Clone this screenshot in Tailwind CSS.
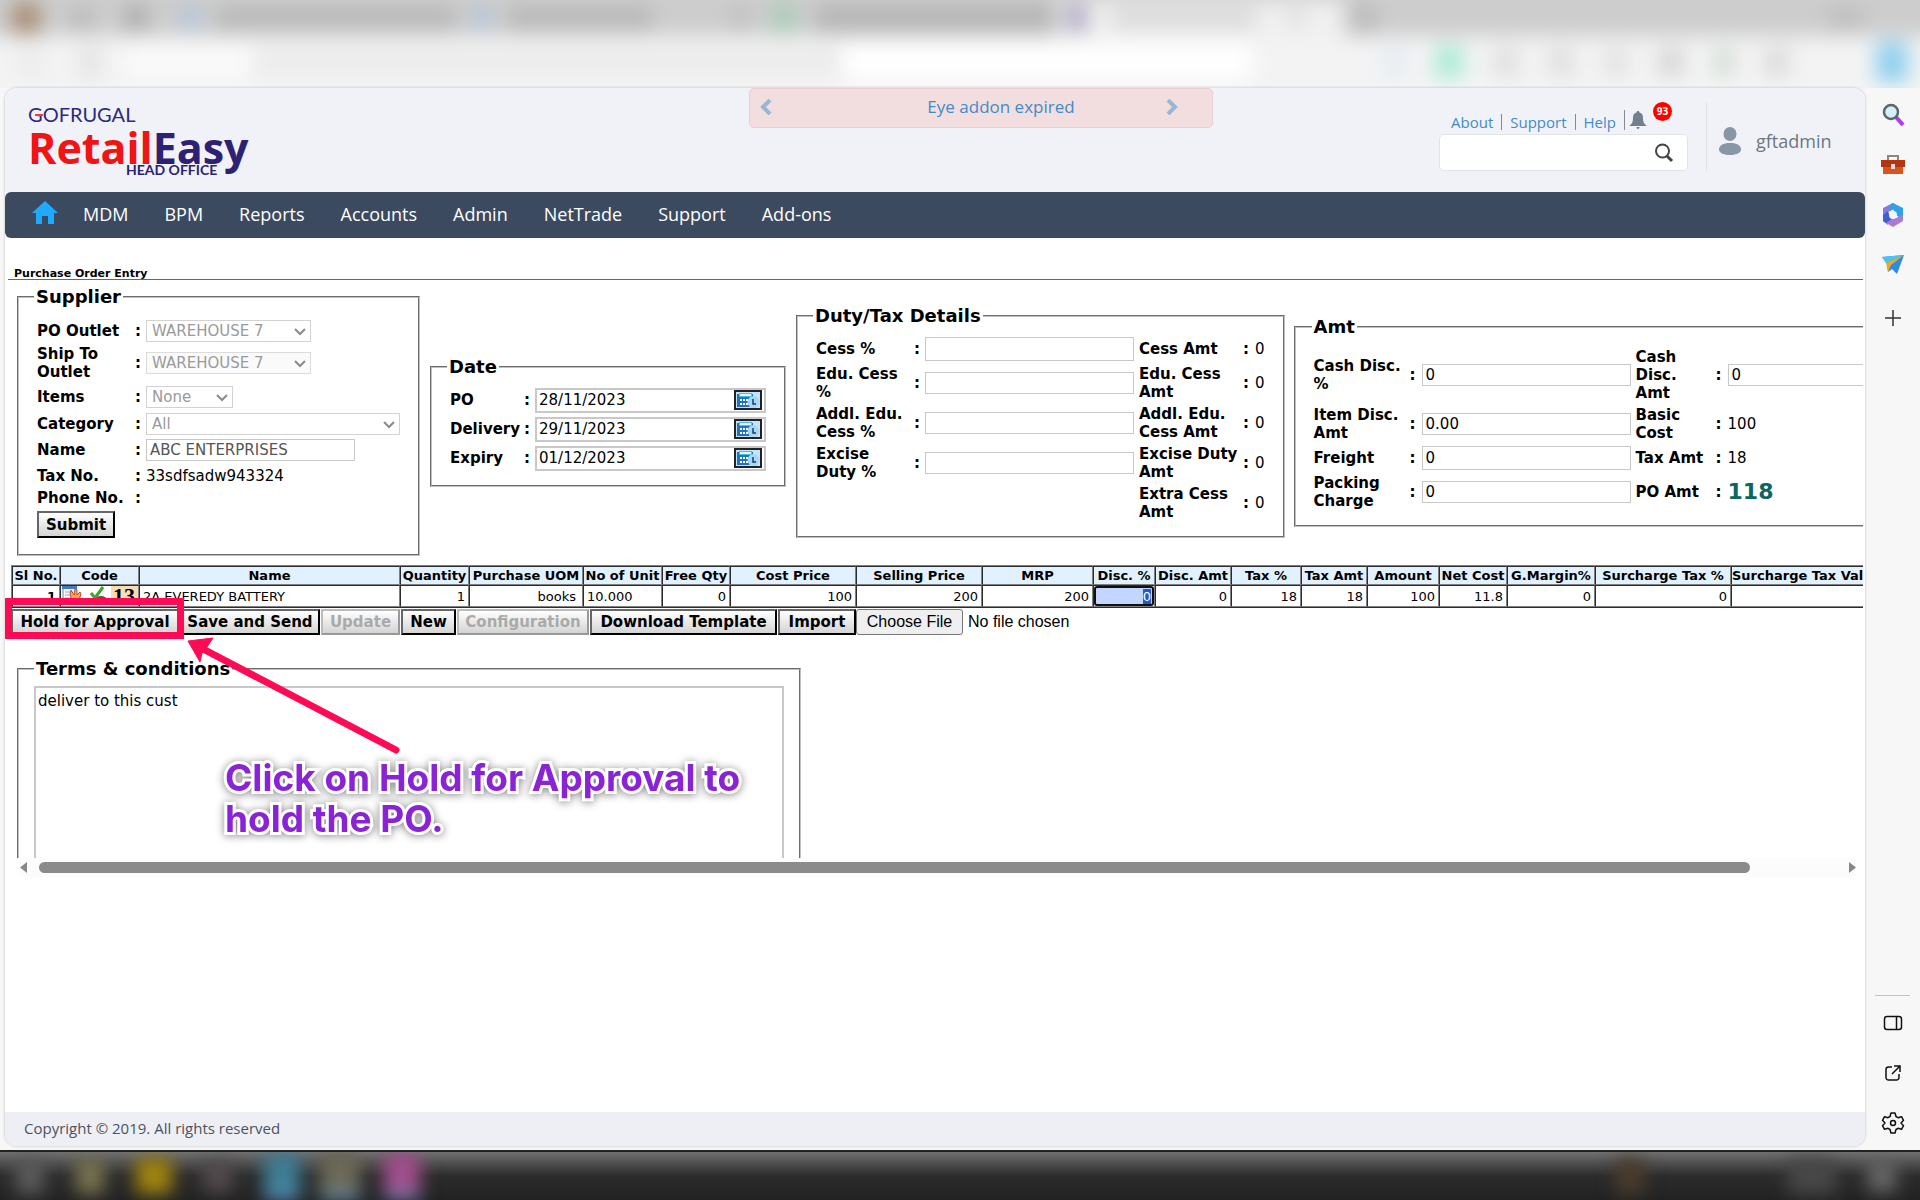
<!DOCTYPE html>
<html lang="en">
<head>
    <meta charset="UTF-8">
    <meta name="viewport" content="width=device-width, initial-scale=1.0">
    <title>Purchase Order Entry</title>
    <script src="https://cdn.jsdelivr.net/npm/@tailwindcss/browser@4"></script>
</head>
<body class="min-h-screen flex flex-col bg-[#f7f7f7] text-black font-['DejaVu_Sans',Verdana,sans-serif]">

    <!-- Browser tabs and toolbar, out of focus -->
    <div class="h-[88px] overflow-hidden bg-[#f3f3f5]" aria-hidden="true">
        <div class="-mx-5 -mt-5 px-5 pt-5 blur-[10px] bg-[#cdcdcd]">
            <div class="h-9 flex items-center">
                <div class="ml-3 w-7 h-8 bg-[#a98f78]"></div>
                <div class="ml-8 w-5 h-5 bg-[#b5b5b5]"></div>
                <div class="ml-8 w-6 h-6 bg-[#adadad]"></div>
                <div class="ml-8 w-5 h-6 bg-[#b4c6da]"></div>
                <div class="ml-4 w-60 h-6 bg-[#b9b9b9]"></div>
                <div class="ml-4 w-5 h-6 bg-[#b4c6da]"></div>
                <div class="ml-4 w-36 h-6 bg-[#b9b9b9]"></div>
                <div class="ml-20 w-4 h-5 bg-[#bcbcbc]"></div>
                <div class="ml-6 w-6 h-7 bg-[#a9cdb6]"></div>
                <div class="ml-5 w-60 h-7 bg-[#b6b6b6]"></div>
                <div class="w-72 h-full bg-[#f0f0f0] flex items-center">
                    <div class="ml-2 w-6 h-7 bg-[#b5afc6]"></div>
                    <div class="ml-6 w-36 h-5 bg-[#d9d9d9]"></div>
                    <div class="ml-8 w-4 h-4 bg-[#d9d9d9]"></div>
                </div>
                <div class="ml-2 w-6 h-7 bg-[#bababa]"></div>
                <div class="ml-auto mr-14 w-9 h-5 bg-[#bdbdbd]"></div>
            </div>
            <div class="h-16 -mx-5 px-5 pb-3 bg-[#f3f3f4] flex items-center">
                <div class="ml-5 w-5 h-8 bg-[#ebebeb]"></div>
                <div class="ml-10 w-5 h-8 bg-[#e3e3e3]"></div>
                <div class="ml-6 w-32 h-8 bg-[#fafafa]"></div>
                <div class="w-[590px] h-6 bg-[#ebebeb]"></div>
                <div class="w-[410px] h-9 bg-white"></div>
                <div class="ml-auto flex items-center gap-[31px]">
                    <div class="w-5 h-7 bg-[#e3ebf3]"></div>
                    <div class="w-7 h-8 bg-[#a9ecd5]"></div>
                    <div class="w-6 h-7 bg-[#dfdfdf]"></div>
                    <div class="w-6 h-7 bg-[#dedede]"></div>
                    <div class="w-6 h-7 bg-[#e2e2e2]"></div>
                    <div class="w-6 h-7 bg-[#d5d5d5]"></div>
                    <div class="w-5 h-7 bg-[#d2ddd2]"></div>
                    <div class="w-6 h-7 bg-[#dadada]"></div>
                    <div class="ml-14 mr-3 w-8 h-10 bg-[#8fd0ee]"></div>
                </div>
            </div>
        </div>
    </div>

    <div class="flex-1 flex">
        <!-- Application page -->
        <div class="relative flex-1 min-w-0 flex flex-col ml-[5px] mb-1 bg-white rounded-xl overflow-hidden shadow-[0_0_3px_#bbb]">

            <header class="flex h-[104px] bg-[#f1f2f8] font-['Open_Sans',sans-serif]">
                <!-- Logo -->
                <div class="w-[744px] pl-[23px] pt-[13px]">
                    <div class="relative w-[222px]">
                        <div class="font-['Lato',sans-serif] text-[20px] leading-[26px] text-[#2c2a80]">
                            <span class="relative">G<i class="absolute right-0 top-[12px] w-2 h-[2px] bg-[#f0402c]"></i></span>OFRUGAL
                        </div>
                        <div class="text-[43px] leading-[42px] font-bold text-[#f01414]">Retail<span class="text-[#2d2173]">Easy</span></div>
                        <div class="absolute left-[98px] top-[60px] font-['Lato',sans-serif] text-[14px] leading-[18px] font-bold text-[#2d2173] whitespace-nowrap">HEAD OFFICE</div>
                    </div>
                </div>

                <!-- Licence alert -->
                <div class="w-[464px] h-10 px-2 pb-[3px] flex items-center bg-[#f2dede] border border-[#ebccd1] rounded-[5px] text-[17px] text-[#428bca]">
                    <button type="button" aria-label="Previous">
                        <svg class="w-4 h-4" viewBox="0 0 16 16" fill="none" stroke="#9ab6d6" stroke-width="4"><path d="M12 1 5 8l7 7"/></svg>
                    </button>
                    <a href="#" class="flex-1 pl-24 text-center">Eye addon expired</a>
                    <button type="button" aria-label="Next" class="ml-8 mr-6">
                        <svg class="w-4 h-4" viewBox="0 0 16 16" fill="none" stroke="#9ab6d6" stroke-width="4"><path d="m4 1 7 7-7 7"/></svg>
                    </button>
                </div>

                <div class="ml-auto pt-[14px] mr-[18px]">
                    <div class="flex items-center h-8 pt-2 pl-3 text-[15px] text-[#428bca]">
                        <a href="#" class="pr-2">About</a>
                        <a href="#" class="px-2 border-l border-[#888] leading-4">Support</a>
                        <a href="#" class="px-2 border-l border-[#888] leading-4">Help</a>
                        <button type="button" aria-label="Notifications" class="relative -mt-1 pl-1 border-l border-[#888]">
                            <svg class="w-[18px] h-5" viewBox="0 0 18 20" fill="#708090"><path d="M9 1c1 0 1.500.600 1.500 1.500C13 3 14 5 14 8c0 4 1 6 3.500 7.500V16H.500v-.500C3 14 4 12 4 8c0-3 1-5 3.500-5.500C7.500 1.600 8 1 9 1ZM7.500 17h3c0 1-.600 2-1.500 2s-1.500-1-1.500-2Z"/></svg>
                            <span class="absolute left-[28px] -top-[8px] w-[19px] h-[19px] rounded-full bg-[#ff0000] text-white text-[10px] leading-[19px] font-bold">93</span>
                        </button>
                    </div>
                    <div class="relative">
                        <input type="text" aria-label="Search" class="w-[249px] h-[37px] px-2 bg-white border border-[#e1e3ea] rounded-[5px]">
                        <svg class="absolute right-[14px] top-[9px] w-5 h-5" viewBox="0 0 20 20" fill="none" stroke="#444" stroke-width="2"><circle cx="8.500" cy="8" r="6.500"/><path d="m13 13 5 5" stroke-width="3"/></svg>
                    </div>
                </div>
                <div class="w-[159px] h-[70px] mt-[14px] pt-2 pl-[11px] flex items-center gap-[14px] border-l border-[#e0e2ea]">
                    <svg class="w-6 h-7" viewBox="0 0 24 28" fill="#8996a5"><ellipse cx="12" cy="7" rx="6.500" ry="7"/><path d="M12 16c7 0 11 2.500 11 6.500 0 3-4 5.500-11 5.500S1 25.500 1 22.500C1 18.500 5 16 12 16Z"/></svg>
                    <span class="text-[18px] font-medium text-[#6b7785]">gftadmin</span>
                </div>
            </header>

            <nav class="h-[46px] pl-[27px] pb-px flex items-center gap-9 rounded-md bg-[#3c4a5f] text-white text-[18px] font-['Open_Sans',sans-serif]">
                <a href="#" aria-label="Home" class="-mr-[11px]">
                    <svg class="w-[26px] h-[23px] mb-1" viewBox="0 0 26 23" fill="#1fa9ff"><path d="M13 0 0 12h4v11h6v-8h6v8h6V12h4Z"/></svg>
                </a>
                <a href="#">MDM</a>
                <a href="#">BPM</a>
                <a href="#">Reports</a>
                <a href="#">Accounts</a>
                <a href="#">Admin</a>
                <a href="#">NetTrade</a>
                <a href="#">Support</a>
                <a href="#">Add-ons</a>
            </nav>

            <main class="ml-[3px] mr-[2px] pt-[30px] overflow-hidden">
                <h1 class="pl-[6px] text-[11px] leading-[11px] font-bold border-b border-[#3d7299]">Purchase Order Entry</h1>

                <form>
                    <div class="mt-[7px] ml-[9px] flex items-center gap-[10px] text-[15px] leading-[18px]">

                        <!-- Supplier -->
                        <fieldset class="shrink-0 w-[403px] px-[18px] pb-4 border-2 [border-style:groove] border-[#c0c0c0]">
                            <legend class="-ml-[3px] px-[2px] text-[18px] leading-5 font-bold">Supplier</legend>
                            <div class="pt-[11px] grid grid-cols-[98px_11px_auto] grid-rows-[26px_38px_30px_24px_28px_24px_20px] items-center justify-items-start">
                                <label for="poOutlet" class="font-bold">PO Outlet</label><b>:</b>
                                <div class="relative">
                                    <select id="poOutlet" disabled class="appearance-none w-[165px] h-[22px] pl-[5px] border border-[#d2d2d2] bg-white text-[#9a9a9a]"><option>WAREHOUSE 7</option></select>
                                    <svg class="absolute right-[5px] top-2 w-3 h-2" viewBox="0 0 12 8" fill="none" stroke="#8a8a8a" stroke-width="2"><path d="m1 1 5 5 5-5"/></svg>
                                </div>
                                <label for="shipOutlet" class="font-bold">Ship To Outlet</label><b>:</b>
                                <div class="relative">
                                    <select id="shipOutlet" disabled class="appearance-none w-[165px] h-[22px] pl-[5px] border border-[#dcdcdc] bg-[#fafafa] text-[#9a9a9a]"><option>WAREHOUSE 7</option></select>
                                    <svg class="absolute right-[5px] top-2 w-3 h-2" viewBox="0 0 12 8" fill="none" stroke="#8a8a8a" stroke-width="2"><path d="m1 1 5 5 5-5"/></svg>
                                </div>
                                <label for="items" class="font-bold">Items</label><b>:</b>
                                <div class="relative">
                                    <select id="items" disabled class="appearance-none w-[87px] h-[22px] pl-[5px] border border-[#d2d2d2] bg-white text-[#9a9a9a]"><option>None</option></select>
                                    <svg class="absolute right-[5px] top-2 w-3 h-2" viewBox="0 0 12 8" fill="none" stroke="#8a8a8a" stroke-width="2"><path d="m1 1 5 5 5-5"/></svg>
                                </div>
                                <label for="category" class="font-bold">Category</label><b>:</b>
                                <div class="relative">
                                    <select id="category" disabled class="appearance-none w-[254px] h-[22px] pl-[5px] border border-[#d2d2d2] bg-white text-[#9a9a9a]"><option>All</option></select>
                                    <svg class="absolute right-[5px] top-2 w-3 h-2" viewBox="0 0 12 8" fill="none" stroke="#8a8a8a" stroke-width="2"><path d="m1 1 5 5 5-5"/></svg>
                                </div>
                                <label for="name" class="font-bold">Name</label><b>:</b>
                                <input type="text" id="name" value="ABC ENTERPRISES" disabled class="w-[209px] h-[22px] px-[3px] border border-[#c8c8c8] text-[#555]">
                                <b>Tax No.</b><b>:</b><span>33sdfsadw943324</span>
                                <b>Phone No.</b><b>:</b><span></span>
                            </div>
                            <button type="submit" class="mt-[3px] h-[27px] px-[7px] border-2 border-t-[#666] border-l-[#666] border-r-black border-b-black bg-linear-to-b from-white to-[#d4d4d4] font-bold">Submit</button>
                        </fieldset>

                        <!-- Dates -->
                        <fieldset class="shrink-0 w-[356px] px-[18px] pb-[14px] border-2 [border-style:groove] border-[#c0c0c0]">
                            <legend class="-ml-[3px] px-[2px] text-[18px] leading-5 font-bold">Date</legend>
                            <div class="pt-[11px] grid grid-cols-[74px_11px_231px] gap-y-1 items-center">
                                <label for="poDate" class="font-bold">PO</label><b>:</b>
                                <div class="flex items-center h-[25px] pr-[2px] border-2 border-[#c8c8c8]">
                                    <input type="text" id="poDate" value="28/11/2023" class="flex-1 min-w-0 pl-[2px]">
                                    <button type="button" aria-label="Pick PO date"><svg class="w-7 h-5" viewBox="0 0 28 20"><path d="M0 0h28v20H0Z" fill="#222"/><path d="M2 2h24v16H2Z" fill="#c4e4f8"/><path d="M3 4h16v13H3Z" fill="#1f73bd"/><path d="M5 3h13v4H5Z" fill="#3fc4e6"/><path d="M6 4h11v2H6Z" fill="#e9f6ff"/><path d="M6 9h2v2H6Zm3 0h2v2H9Zm3 0h2v2h-2Zm-6 4h2v2H6Zm3 0h2v2H9Zm3 0h2v2h-2Z" fill="#fff"/><circle cx="19.500" cy="12" r="6" fill="#a8d6f5"/><path d="M19 9v5h3" fill="none" stroke="#173f66" stroke-width="1.500"/></svg></button>
                                </div>
                                <label for="deliveryDate" class="font-bold">Delivery</label><b>:</b>
                                <div class="flex items-center h-[25px] pr-[2px] border-2 border-[#c8c8c8]">
                                    <input type="text" id="deliveryDate" value="29/11/2023" class="flex-1 min-w-0 pl-[2px]">
                                    <button type="button" aria-label="Pick delivery date"><svg class="w-7 h-5" viewBox="0 0 28 20"><path d="M0 0h28v20H0Z" fill="#222"/><path d="M2 2h24v16H2Z" fill="#c4e4f8"/><path d="M3 4h16v13H3Z" fill="#1f73bd"/><path d="M5 3h13v4H5Z" fill="#3fc4e6"/><path d="M6 4h11v2H6Z" fill="#e9f6ff"/><path d="M6 9h2v2H6Zm3 0h2v2H9Zm3 0h2v2h-2Zm-6 4h2v2H6Zm3 0h2v2H9Zm3 0h2v2h-2Z" fill="#fff"/><circle cx="19.500" cy="12" r="6" fill="#a8d6f5"/><path d="M19 9v5h3" fill="none" stroke="#173f66" stroke-width="1.500"/></svg></button>
                                </div>
                                <label for="expiryDate" class="font-bold">Expiry</label><b>:</b>
                                <div class="flex items-center h-[25px] pr-[2px] border-2 border-[#c8c8c8]">
                                    <input type="text" id="expiryDate" value="01/12/2023" class="flex-1 min-w-0 pl-[2px]">
                                    <button type="button" aria-label="Pick expiry date"><svg class="w-7 h-5" viewBox="0 0 28 20"><path d="M0 0h28v20H0Z" fill="#222"/><path d="M2 2h24v16H2Z" fill="#c4e4f8"/><path d="M3 4h16v13H3Z" fill="#1f73bd"/><path d="M5 3h13v4H5Z" fill="#3fc4e6"/><path d="M6 4h11v2H6Z" fill="#e9f6ff"/><path d="M6 9h2v2H6Zm3 0h2v2H9Zm3 0h2v2h-2Zm-6 4h2v2H6Zm3 0h2v2H9Zm3 0h2v2h-2Z" fill="#fff"/><circle cx="19.500" cy="12" r="6" fill="#a8d6f5"/><path d="M19 9v5h3" fill="none" stroke="#173f66" stroke-width="1.500"/></svg></button>
                                </div>
                            </div>
                        </fieldset>

                        <!-- Duty and tax -->
                        <fieldset class="shrink-0 w-[487px] px-[18px] pb-[15px] border-2 [border-style:groove] border-[#c0c0c0]">
                            <legend class="-ml-[3px] px-[2px] text-[18px] leading-5 font-bold">Duty/Tax Details</legend>
                            <div class="pt-[11px] grid grid-cols-[98px_11px_209px_109px_12px_auto] gap-y-1 items-center">
                                <label for="cess" class="font-bold">Cess %</label><b>:</b>
                                <input type="text" id="cess" class="h-6 px-[3px] border border-[#c8c8c8]">
                                <b class="pl-[5px]">Cess Amt</b><b>:</b><span>0</span>
                                <label for="eduCess" class="font-bold">Edu. Cess %</label><b>:</b>
                                <input type="text" id="eduCess" class="h-[22px] px-[3px] border border-[#c8c8c8]">
                                <b class="pl-[5px]">Edu. Cess Amt</b><b>:</b><span>0</span>
                                <label for="addlCess" class="font-bold">Addl. Edu. Cess %</label><b>:</b>
                                <input type="text" id="addlCess" class="h-[22px] px-[3px] border border-[#c8c8c8]">
                                <b class="pl-[5px]">Addl. Edu. Cess Amt</b><b>:</b><span>0</span>
                                <label for="excise" class="font-bold">Excise Duty %</label><b>:</b>
                                <input type="text" id="excise" class="h-[22px] px-[3px] border border-[#c8c8c8]">
                                <b class="pl-[5px]">Excise Duty Amt</b><b>:</b><span>0</span>
                                <b class="col-start-4 pl-[5px]">Extra Cess Amt</b><b>:</b><span>0</span>
                            </div>
                        </fieldset>

                        <!-- Amounts -->
                        <fieldset class="shrink-0 w-[664px] -ml-px pl-[18px] pb-[15px] border-2 [border-style:groove] border-[#c0c0c0]">
                            <legend class="-ml-[2px] px-[2px] text-[18px] leading-5 font-bold">Amt</legend>
                            <div class="pt-[11px] grid grid-cols-[96px_12px_209px_85px_12px_209px] gap-y-1 items-center">
                                <label for="cashDisc" class="font-bold">Cash Disc. %</label><b>:</b>
                                <input type="text" id="cashDisc" value="0" class="h-[22px] px-[3px] border border-[#c8c8c8]">
                                <label for="cashDiscAmt" class="pl-[5px] font-bold">Cash Disc. Amt</label><b>:</b>
                                <input type="text" id="cashDiscAmt" value="0" class="h-[22px] px-[3px] border border-[#c8c8c8]">
                                <label for="itemDisc" class="font-bold">Item Disc. Amt</label><b>:</b>
                                <input type="text" id="itemDisc" value="0.00" class="h-[22px] px-[3px] border border-[#c8c8c8]">
                                <b class="pl-[5px]">Basic Cost</b><b>:</b><span>100</span>
                                <label for="freight" class="font-bold">Freight</label><b>:</b>
                                <input type="text" id="freight" value="0" class="h-6 px-[3px] border border-[#c8c8c8]">
                                <b class="pl-[5px]">Tax Amt</b><b>:</b><span>18</span>
                                <label for="packing" class="font-bold">Packing Charge</label><b>:</b>
                                <input type="text" id="packing" value="0" class="h-[22px] px-[3px] border border-[#c8c8c8]">
                                <b class="pl-[5px]">PO Amt</b><b>:</b><b class="text-[22px] text-[#0a6664]">118</b>
                            </div>
                        </fieldset>
                    </div>

                    <!-- Item lines -->
                    <table class="mt-[9px] ml-[3px] w-[1870px] table-fixed border-separate border-spacing-0 border border-t-[#808080] border-l-[#808080] border-r-[#2c2c2c] border-b-[#2c2c2c] text-[13px] leading-[17px] whitespace-nowrap">
                        <colgroup>
                            <col class="w-[48px]"><col class="w-[79px]"><col class="w-[261px]"><col class="w-[69px]"><col class="w-[114px]"><col class="w-[79px]"><col class="w-[68px]"><col class="w-[126px]"><col class="w-[126px]"><col class="w-[111px]"><col class="w-[62px]"><col class="w-[76px]"><col class="w-[70px]"><col class="w-[66px]"><col class="w-[72px]"><col class="w-[68px]"><col class="w-[88px]"><col class="w-[136px]"><col class="w-[149px]">
                        </colgroup>
                        <thead>
                            <tr class="bg-[#e1f1ff] [&>th]:border [&>th]:border-t-[#2c2c2c] [&>th]:border-l-[#2c2c2c] [&>th]:border-r-[#808080] [&>th]:border-b-[#808080]">
                                <th>Sl No.</th><th>Code</th><th>Name</th><th>Quantity</th><th>Purchase UOM</th><th>No of Unit</th><th>Free Qty</th><th>Cost Price</th><th>Selling Price</th><th>MRP</th><th>Disc. %</th><th>Disc. Amt</th><th>Tax %</th><th>Tax Amt</th><th>Amount</th><th>Net Cost</th><th>G.Margin%</th><th>Surcharge Tax %</th><th>Surcharge Tax Value</th>
                            </tr>
                        </thead>
                        <tbody>
                            <tr class="h-[22px] text-right [&>td]:px-[3px] [&>td]:border [&>td]:border-t-[#2c2c2c] [&>td]:border-l-[#2c2c2c] [&>td]:border-r-[#808080] [&>td]:border-b-[#808080]">
                                <td class="font-bold">1</td>
                                <td class="bg-linear-to-r from-white from-65% to-[#f8dcb4] to-65%">
                                    <div class="-ml-[2px] h-5 flex items-start justify-between">
                                        <svg class="w-5 h-5" viewBox="0 0 20 20"><path d="M1 1h13v16H1Z" fill="#f4f8ff" stroke="#5c84c4"/><path d="M0 0h15v3H0Z" fill="#3f78d0"/><path d="M3 6h7M3 9h5M3 12h6" stroke="#9ab" /><path d="m9 4 3 5 1-6 2 1v5l3-3 1 2-2 6-2 5-5-4-2-7Z" fill="#f4a66a" stroke="#b4532a"/></svg>
                                        <svg class="w-5 h-5" viewBox="0 0 20 20"><ellipse cx="13" cy="14" rx="6" ry="4" fill="#555"/><path d="m3 7 4 5L15 1" fill="none" stroke="#3ea52c" stroke-width="3"/></svg>
                                        <span class="font-['Liberation_Serif',serif] text-[22px] leading-5 font-bold">13</span>
                                    </div>
                                </td>
                                <td class="text-left">2A EVEREDY BATTERY</td>
                                <td>1</td>
                                <td><span class="pr-[3px]">books</span></td>
                                <td class="text-left">10.000</td>
                                <td>0</td><td>100</td><td>200</td><td>200</td>
                                <td class="relative"><input type="text" id="discPercent" aria-label="Disc. %" value="0" class="absolute inset-0 h-[20px] w-full pr-px text-right border-2 border-[#101010] rounded-[3px] bg-[#c2d6ff] outline-none selection:bg-[#1f5bd0] selection:text-white"></td>
                                <td>0</td><td>18</td><td>18</td><td>100</td><td>11.8</td><td>0</td><td>0</td><td>0</td>
                            </tr>
                        </tbody>
                    </table>

                    <!-- Actions -->
                    <div class="mt-px ml-[3px] flex items-start gap-px text-[15px] font-bold whitespace-nowrap">
                        <button type="button" class="h-[26px] w-[168px] border-2 border-t-[#666] border-l-[#666] border-r-black border-b-black bg-linear-to-b from-white to-[#d4d4d4]">Hold for Approval</button>
                        <button type="button" class="h-[26px] w-[140px] border-2 border-t-[#666] border-l-[#666] border-r-black border-b-black bg-linear-to-b from-white to-[#d4d4d4]">Save and Send</button>
                        <button type="button" disabled class="h-[26px] w-[79px] border-2 border-t-[#bbb] border-l-[#bbb] border-r-[#999] border-b-[#999] bg-linear-to-b from-white to-[#d4d4d4] text-[#aaa]">Update</button>
                        <button type="button" class="h-[26px] w-[55px] border-2 border-t-[#666] border-l-[#666] border-r-black border-b-black bg-linear-to-b from-white to-[#d4d4d4]">New</button>
                        <button type="button" disabled class="h-[26px] w-[132px] border-2 border-t-[#bbb] border-l-[#bbb] border-r-[#999] border-b-[#999] bg-linear-to-b from-white to-[#d4d4d4] text-[#aaa]">Configuration</button>
                        <button type="button" class="h-[26px] w-[187px] border-2 border-t-[#666] border-l-[#666] border-r-black border-b-black bg-linear-to-b from-white to-[#d4d4d4]">Download Template</button>
                        <button type="button" class="h-[26px] w-[78px] border-2 border-t-[#666] border-l-[#666] border-r-black border-b-black bg-linear-to-b from-white to-[#d4d4d4]">Import</button>
                        <input type="file" aria-label="Import file" class="-ml-px h-[26px] w-[320px] font-normal text-[16px] leading-[22px] font-['Liberation_Sans',Arial,sans-serif] file:h-[26px] file:w-[107px] file:mr-[5px] file:p-0 file:border file:border-solid file:border-[#767676] file:rounded-[3px] file:bg-[#efefef]">
                    </div>

                    <!-- Terms, running on below the fold of the scroll area -->
                    <fieldset class="mt-[24px] ml-[9px] w-[784px] px-[15px] border-2 border-b-0 [border-style:groove] border-[#c0c0c0]">
                        <legend class="px-[2px] text-[18px] leading-5 font-bold">Terms &amp; conditions</legend>
                        <textarea aria-label="Terms and conditions" class="block mt-[7px] w-full h-[172px] px-[2px] py-[4px] resize-none border-2 border-b-0 border-[#c8c8c8] text-[15px] leading-[18px]">deliver to this cust</textarea>
                    </fieldset>
                </form>

                <!-- Horizontal scrollbar -->
                <div class="flex items-center h-[19px] ml-3 mr-[7px] bg-[#fcfcfc]">
                    <svg class="w-[7px] h-[11px]" viewBox="0 0 7 11" fill="#888"><path d="M7 0v11L0 5.500Z"/></svg>
                    <div class="flex-1 ml-3 mr-[99px]"><div class="h-[11px] rounded-full bg-[#8b8b8b]"></div></div>
                    <svg class="w-[7px] h-[11px]" viewBox="0 0 7 11" fill="#888"><path d="M0 0v11l7-5.500Z"/></svg>
                </div>
            </main>

            <footer class="mt-auto h-[34px] pl-[19px] pb-[2px] flex items-center bg-[#eeeff4] text-[15px] text-[#4b5260] font-['Open_Sans',sans-serif]">Copyright © 2019. All rights reserved</footer>

            <!-- Walkthrough callout -->
            <div class="absolute left-0 top-[510px] w-[179px] h-[41px] border-[7px] border-[#ff0a54]"></div>
            <svg class="absolute left-[180px] top-[548px] w-[220px] h-[125px]" viewBox="0 0 220 125"><path d="m20 14 191 100" stroke="#ff0a54" stroke-width="7" stroke-linecap="round"/><path d="M3 5 28 2l-6 9-5 6-2 9Z" fill="#ff0a54" stroke="#ff0a54"/></svg>
            <p class="absolute left-[220px] top-[669px] font-['Inter',sans-serif] text-[37px] leading-[41px] font-bold text-[#8a22d6] whitespace-nowrap [paint-order:stroke_fill] [-webkit-text-stroke:6px_white] [filter:drop-shadow(0_1px_4px_#888)]">Click on Hold for Approval to<br>hold the PO.</p>
        </div>

        <!-- Browser sidebar -->
        <aside class="w-[55px] pt-3 pb-[13px] flex flex-col items-center gap-[22px]">
            <button type="button" aria-label="Search"><svg class="w-7 h-7" viewBox="0 0 28 28"><path d="m17 17 7 8" stroke="#b23be8" stroke-width="4"/><circle cx="12" cy="12" r="7" fill="#d4effc" stroke="#5f666b" stroke-width="2.500"/></svg></button>
            <button type="button" aria-label="Tools"><svg class="w-7 h-7" viewBox="0 0 28 28"><path d="M9 10V6h10v4" fill="none" stroke="#888" stroke-width="2"/><path d="M4 14h20v10H4Z" fill="#d8531d"/><path d="M2 10h24v7H2Z" fill="#b5350f"/><path d="M12 14h4v5h-4Z" fill="#ddd"/></svg></button>
            <button type="button" aria-label="Microsoft 365"><svg class="w-7 h-7" viewBox="0 0 28 28"><path d="M14 3 4 8v13l5 4V12l6-3V4Z" fill="#8c78dc"/><path d="m12 4 2-1 10 5v12l-7-5-3-6-3 2V5Z" fill="#2fa3e8"/><path d="m24 15-7 3-5-1-5 6 7 4 10-6Z" fill="#a97bd6"/><path d="M4 15v6l3 2 6-4-3-5-1-3Z" fill="#3d5fd0"/><circle cx="14" cy="15" r="4" fill="#f7f7f7"/></svg></button>
            <button type="button" aria-label="Drop"><svg class="w-7 h-7" viewBox="0 0 28 28"><path d="m3 7 22-2-7 19-5-5-4 3-1-8Z" fill="#2b8ce8"/><path d="M3 7 25 5 7 13Z" fill="#4cc3f5"/><path d="M25 5 7 13l2 9 3-7Z" fill="#f0ab1c"/></svg></button>
            <button type="button" aria-label="Customize" class="mt-1"><svg class="w-7 h-7" viewBox="0 0 28 28" stroke="#333" stroke-width="1.500"><path d="M14 6v16M6 14h16"/></svg></button>
            <hr class="mt-auto w-[35px] border-[#c3c3c3] -mb-[9px]">
            <button type="button" aria-label="Hide sidebar"><svg class="w-7 h-7" viewBox="0 0 28 28" fill="none" stroke="#111" stroke-width="1.500"><rect x="5.500" y="7.500" width="17" height="13" rx="2.500"/><path d="M17.500 8v12"/></svg></button>
            <button type="button" aria-label="Open in new window"><svg class="w-7 h-7" viewBox="0 0 28 28" fill="none" stroke="#111" stroke-width="1.500"><path d="M13 8H9.500A2.500 2.500 0 0 0 7 10.500v8A2.500 2.500 0 0 0 9.500 21h8a2.500 2.500 0 0 0 2.500-2.500V15M15 7h6v6M21 7l-8 8"/></svg></button>
            <button type="button" aria-label="Settings"><svg class="w-7 h-7" viewBox="0 0 28 28" fill="none" stroke="#111" stroke-width="1.500" stroke-linejoin="round"><path d="M12 4h4l1 3.500 2 1.200 3.500-1 2 3.600L22 14l2.500 2.700-2 3.600-3.500-1-2 1.200-1 3.500h-4l-1-3.500-2-1.200-3.500 1-2-3.600L6 14l-2.500-2.700 2-3.600 3.500 1 2-1.200Z"/><circle cx="14" cy="14" r="2.500"/></svg></button>
        </aside>
    </div>

    <!-- Taskbar, out of focus -->
    <div class="h-[50px] overflow-hidden border-t-2 border-[#222] bg-linear-to-b from-[#707070] via-[#2c2c2c] via-50% to-[#222]" aria-hidden="true">
        <div class="h-12 flex items-center gap-[32px] pl-4 blur-[9px]">
            <div class="w-7 h-9 bg-[#5c5c5c]"></div>
            <div class="w-7 h-9 bg-[#7a7550]"></div>
            <div class="w-9 h-9 bg-[#a3860e]"></div>
            <div class="w-7 h-8 bg-[#554d50]"></div>
            <div class="w-9 h-12 bg-[#3f7f95] border-b-8 border-[#5c9bd6]"></div>
            <div class="-ml-3 w-10 h-12 bg-[#6d6a58] border-b-8 border-[#6c9bc2]"></div>
            <div class="-ml-2 w-9 h-12 bg-[#a34f8e] border-b-8 border-[#7089c2]"></div>
            <div class="ml-auto w-7 h-9 bg-[#4b3c2c]"></div>
            <div class="ml-28 w-12 h-9 bg-[#484848]"></div>
            <div class="mr-6 w-7 h-8 bg-[#686868]"></div>
        </div>
    </div>

    <script>
        // The discount cell is being edited: focus it with its value selected
        const discInput = document.getElementById('discPercent');
        discInput.focus({ preventScroll: true });
        discInput.select();
    </script>
</body>
</html>
